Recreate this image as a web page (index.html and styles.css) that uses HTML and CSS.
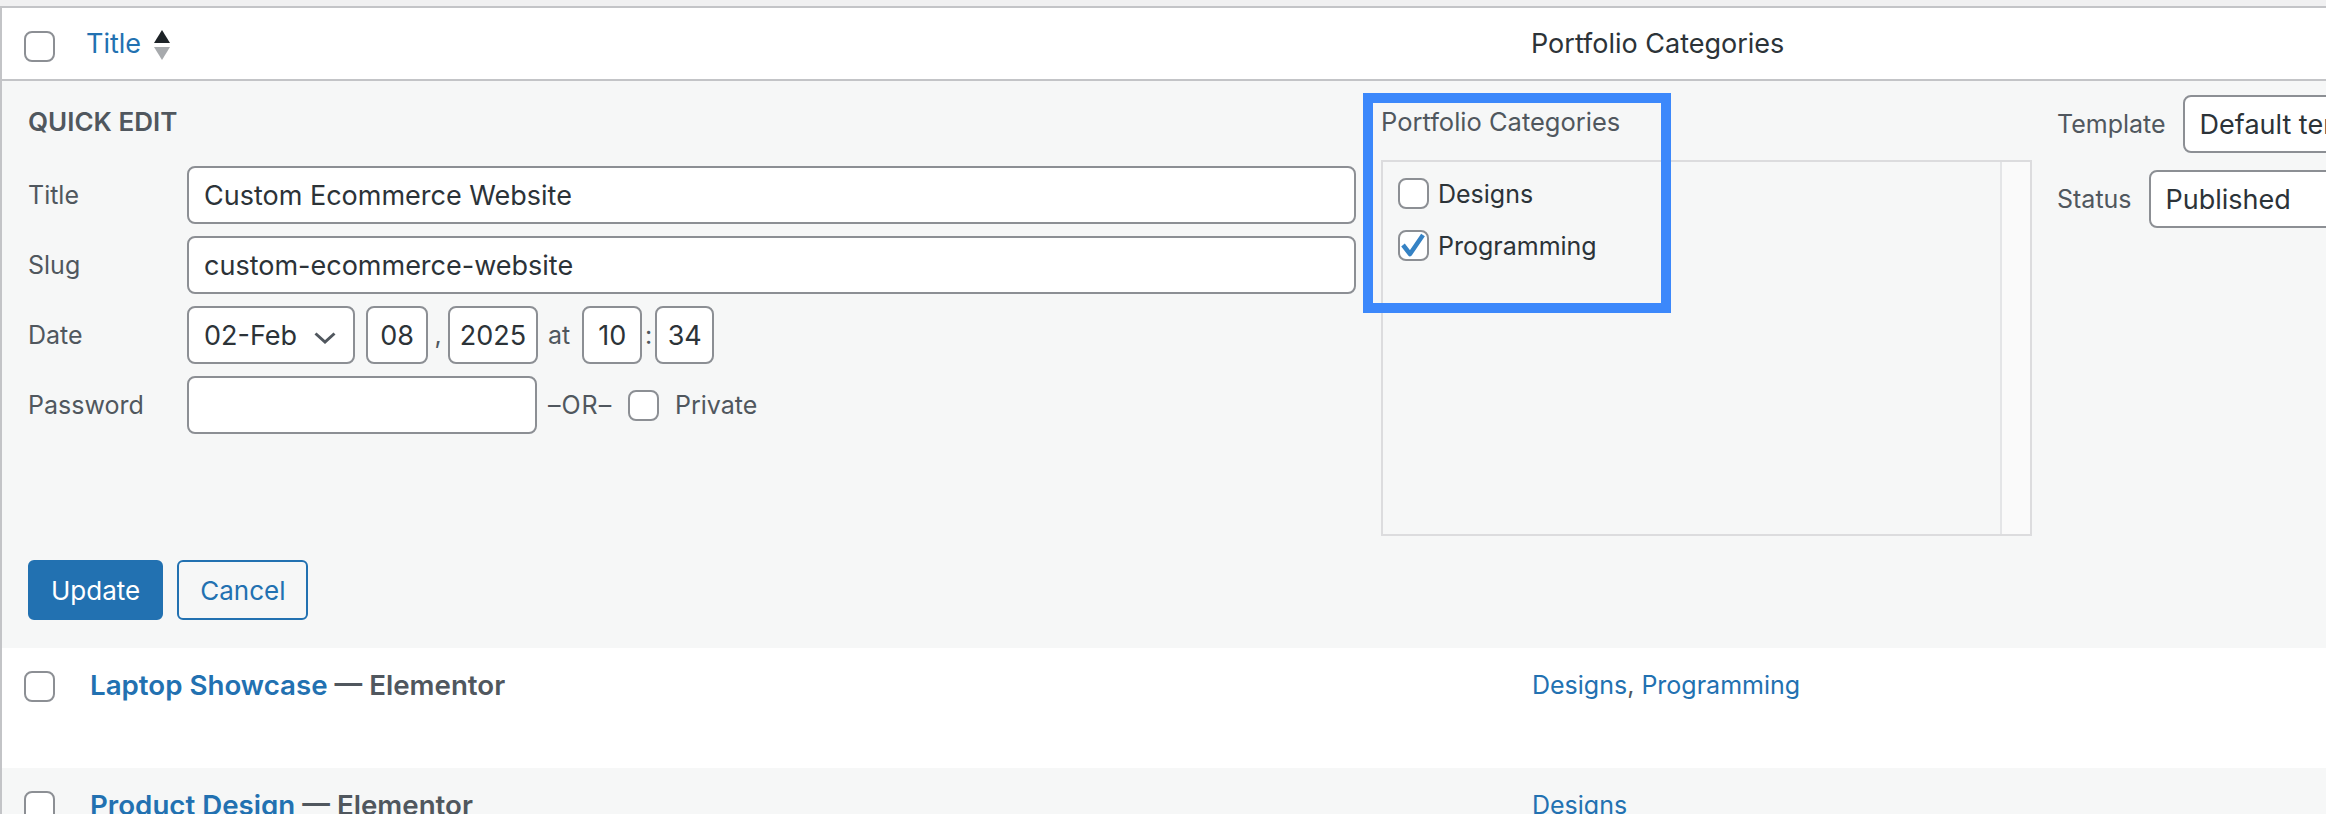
FILE: index.html
```html
<!DOCTYPE html>
<html>
<head>
	<title>Portfolio - Quick Edit</title>
	<link rel="stylesheet" href="styles.css">
</head>
<body>
<div class="page">
	<div class="list">
		<div class="row head">
			<div class="col-cb"><span class="cb"></span></div>
			<div class="col-title">
				<a href="#">Title</a>
				<svg class="sort" width="16" height="30" viewBox="0 0 16 30">
					<polygon points="8,0 16,13 0,13" fill="#1d2327"/>
					<polygon points="0,17 16,17 8,30" fill="#a7aaad"/>
				</svg>
			</div>
			<div class="col-cat">Portfolio Categories</div>
		</div>

		<div class="quick-edit">
			<div class="qe-fields">
				<div class="qe-left">
					<div class="legend">QUICK EDIT</div>
					<div class="field">
						<label>Title</label>
						<input class="input wide" type="text" value="Custom Ecommerce Website">
					</div>
					<div class="field">
						<label>Slug</label>
						<input class="input wide" type="text" value="custom-ecommerce-website">
					</div>
					<div class="field">
						<label>Date</label>
						<div class="select month">02-Feb
							<svg class="chev" width="22" height="12" viewBox="0 0 22 12"><polyline points="1.5,1.5 11,10 20.5,1.5" fill="none" stroke="#50575e" stroke-width="3"/></svg>
						</div>
						<input class="input num day" type="text" value="08">
						<span class="sep comma">,</span>
						<input class="input num year" type="text" value="2025">
						<span class="sep at">at</span>
						<input class="input num hour" type="text" value="10">
						<span class="sep colon">:</span>
						<input class="input num minute" type="text" value="34">
					</div>
					<div class="field">
						<label>Password</label>
						<input class="input pass" type="text" value="">
						<span class="or">–OR–</span>
						<span class="cb private-cb"></span>
						<span class="private">Private</span>
					</div>
				</div>

				<div class="qe-cats">
					<div class="highlight"></div>
					<div class="cats-label">Portfolio Categories</div>
					<div class="checklist">
						<ul>
							<li><span class="cb"></span>Designs</li>
							<li><span class="cb"><svg width="27" height="27" viewBox="0 0 27 27"><polyline points="3,13 10,22 23,3" fill="none" stroke="#3582c4" stroke-width="4.5" stroke-linejoin="round"/></svg></span>Programming</li>
						</ul>
						<div class="track"></div>
					</div>
				</div>

				<div class="qe-right">
					<div class="inline-field tpl">
						<label>Template</label>
						<div class="select wide-select">Default template</div>
					</div>
					<div class="inline-field">
						<label>Status</label>
						<div class="select wide-select">Published</div>
					</div>
				</div>
			</div>
			<div class="qe-actions">
				<button class="button primary">Update</button>
				<button class="button secondary">Cancel</button>
			</div>
		</div>

		<div class="row post">
			<div class="col-cb"><span class="cb"></span></div>
			<div class="col-title"><a href="#">Laptop Showcase</a> <span class="state">— Elementor</span></div>
			<div class="col-cat"><a href="#">Designs</a>, <a href="#">Programming</a></div>
		</div>
		<div class="row post alt">
			<div class="col-cb"><span class="cb"></span></div>
			<div class="col-title"><a href="#">Product Design</a> <span class="state">— Elementor</span></div>
			<div class="col-cat"><a href="#">Designs</a></div>
		</div>
	</div>
</div>
</body>
</html>
```

FILE: styles.css
```css
html, body{
	margin: 0;
	overflow: hidden;
}
body{
	background: #f0f0f1;
	font-family: Inter, "Noto Sans", sans-serif;
	color: #3c434a;
}
a{
	color: #2271b1;
	text-decoration: none;
}
.page{
	padding-top: 6px;
	height: 808px;
	overflow: hidden;
}
.list{
	border-top: 2px solid #c3c4c7;
	border-left: 2px solid #c3c4c7;
	background: #fff;
}
.row{
	display: flex;
}
.col-cb{
	width: 84px;
	padding-left: 22px;
	box-sizing: border-box;
	flex: none;
}
.col-title{
	width: 1445px;
	flex: none;
}
.col-cat{
	flex: 1;
}

/* checkbox */
.cb{
	display: block;
	width: 31px;
	height: 31px;
	box-sizing: border-box;
	border: 2px solid #8c8f94;
	border-radius: 8px;
	background: #fff;
	position: relative;
	flex: none;
}
.cb svg{
	position: absolute;
	left: 0;
	top: 0;
}

/* header */
.head{
	height: 71px;
	border-bottom: 2px solid #c3c4c7;
	align-items: center;
}
.head .cb{
	margin-top: 6px;
}
.head .col-title{
	display: flex;
	align-items: center;
	font-size: 27px;
}
.sort{
	margin-left: 13px;
	margin-top: 2px;
}
.head .col-cat{
	font-size: 27px;
	color: #2c3338;
}

/* quick edit */
.quick-edit{
	background: #f6f7f7;
	padding: 14px 0 28px 26px;
}
.qe-fields{
	display: flex;
	align-items: flex-start;
}
.qe-left{
	width: 1328px;
	margin-right: 25px;
	flex: none;
}
.legend{
	margin-top: 6px;
	height: 42px;
	line-height: 42px;
	font-size: 26px;
	font-weight: 600;
	color: #50575e;
	margin-bottom: 23px;
}
.field{
	display: flex;
	align-items: center;
	height: 58px;
	margin-bottom: 12px;
}
.field label{
	width: 159px;
	flex: none;
	font-size: 25px;
	color: #50575e;
}
.input, .select{
	height: 58px;
	box-sizing: border-box;
	border: 2px solid #8c8f94;
	border-radius: 8px;
	background: #fff;
	font-family: Inter, "Noto Sans", sans-serif;
	font-size: 27px;
	color: #2c3338;
	padding: 0 15px;
	outline: none;
}
.input.wide{
	width: 1169px;
}
.select{
	display: flex;
	align-items: center;
	position: relative;
	white-space: nowrap;
}
.select.month{
	width: 168px;
	margin-right: 11px;
}
.chev{
	position: absolute;
	right: 17px;
	top: 24px;
}
.input.num{
	padding: 0;
	text-align: center;
}
.day{ width: 62px; }
.year{ width: 90px; }
.hour{ width: 60px; }
.minute{ width: 59px; }
.sep{
	font-size: 25px;
	color: #50575e;
	text-align: center;
}
.comma{ width: 20px; }
.at{ margin: 0 12px 0 10px; }
.colon{ width: 13px; }
.input.pass{
	width: 350px;
}
.or{
	display: inline-block;
	width: 67px;
	margin-left: 11px;
	font-size: 25px;
	color: #50575e;
	letter-spacing: 1px;
}
.private-cb{
	margin-left: 13px;
}
.private{
	margin-left: 16px;
	font-size: 25px;
	color: #50575e;
}

/* categories */
.qe-cats{
	width: 651px;
	margin-right: 25px;
	flex: none;
	position: relative;
}
.highlight{
	position: absolute;
	left: -18px;
	top: -2px;
	width: 308px;
	height: 220px;
	box-sizing: border-box;
	border: 10px solid #3c88fb;
}
.cats-label{
	margin-top: 6px;
	height: 42px;
	line-height: 42px;
	font-size: 25.5px;
	color: #50575e;
	margin-bottom: 17px;
}
.checklist{
	height: 376px;
	box-sizing: border-box;
	border: 2px solid #dcdcde;
	display: flex;
}
.checklist ul{
	flex: 1;
	margin: 0;
	padding: 16px 0 0 15px;
	list-style: none;
}
.checklist li{
	display: flex;
	align-items: center;
	height: 31px;
	margin-bottom: 21px;
	font-size: 25px;
	color: #2c3338;
}
.checklist li .cb{
	margin-right: 9px;
}
.track{
	width: 30px;
	box-sizing: border-box;
	border-left: 2px solid #e4e5e7;
	background: #fafafa;
}

/* template / status */
.qe-right{
	flex: 1;
}
.inline-field{
	display: flex;
	align-items: center;
	height: 58px;
}
.inline-field.tpl{
	margin-bottom: 17px;
}
.inline-field label{
	font-size: 25px;
	color: #50575e;
	margin-right: 17px;
}
.wide-select{
	width: 400px;
	flex: none;
}

/* buttons */
.qe-actions{
	margin-top: 24px;
	display: flex;
	gap: 14px;
}
.button{
	height: 60px;
	box-sizing: border-box;
	border-radius: 6px;
	border: 2px solid #2271b1;
	padding: 0 21px;
	font-family: Inter, "Noto Sans", sans-serif;
	font-size: 26px;
}
.primary{
	background: #2271b1;
	color: #fff;
}
.secondary{
	background: #f6f7f7;
	color: #2271b1;
}

/* rows */
.post{
	height: 120px;
	align-items: flex-start;
}
.post.alt{
	background: #f6f7f7;
}
.post .col-cb{
	padding-top: 23px;
}
.post .col-title{
	padding: 18px 0 0 4px;
	line-height: 38px;
	font-size: 27.7px;
	font-weight: 600;
}
.state{
	color: #50575e;
}
.post .col-cat{
	padding-top: 18px;
	margin-left: -3px;
	line-height: 38px;
	font-size: 25px;
	color: #50575e;
}
```
